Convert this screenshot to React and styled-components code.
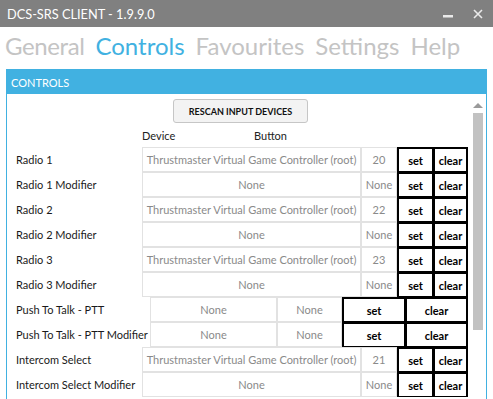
import React from 'react';
import styled, { createGlobalStyle } from 'styled-components';

const ACCENT = '#41B1E1';
const TM = 'Thrustmaster Virtual Game Controller (root)';

const Global = createGlobalStyle`
  html, body { margin: 0; padding: 0; background: #fff; overflow: hidden; }
  body { font-family: "Lato", "Open Sans", sans-serif; }
  * { box-sizing: border-box; }
`;

const Window = styled.div`
  width: 493px;
  height: 399px;
  display: flex;
  flex-direction: column;
  overflow: hidden;
  background: #fff;
`;

const TitleBar = styled.div`
  flex: none;
  height: 27px;
  background: #808080;
  display: flex;
  align-items: center;
  padding-left: 7px;
  color: #fff;
`;

const Title = styled.div`
  font-size: 12.75px;
`;

const WindowButtons = styled.div`
  margin-left: auto;
  display: flex;
  height: 100%;
`;

const WindowButton = styled.div`
  width: 30px;
  height: 100%;
  display: flex;
  align-items: center;
  justify-content: center;
`;

const TabStrip = styled.div`
  flex: none;
  height: 42px;
  display: flex;
  gap: 11px;
  padding: 3px 0 0 5px;
`;

const Tab = styled.div`
  font-size: 24px;
  line-height: 32px;
  letter-spacing: ${p => (p.$tight ? '-0.4px' : '0')};
  color: ${p => (p.$active ? ACCENT : '#c4c4c4')};
`;

const Panel = styled.div`
  flex: 1;
  min-height: 0;
  margin: 0 6px;
  border: 1px solid ${ACCENT};
  border-bottom: none;
  display: flex;
  flex-direction: column;
`;

const PanelHeader = styled.div`
  flex: none;
  height: 24px;
  background: ${ACCENT};
  color: #fff;
  font-size: 11px;
  display: flex;
  align-items: center;
  padding-left: 4px;
`;

const PanelBody = styled.div`
  flex: 1;
  min-height: 0;
  display: flex;
`;

const Content = styled.div`
  flex: 1;
  display: flex;
  flex-direction: column;
`;

const RescanBar = styled.div`
  display: flex;
  justify-content: center;
  padding: 5px 0 0 5px;
`;

const RescanButton = styled.div`
  width: 135px;
  height: 24px;
  border: 1px solid #c6c6c6;
  border-radius: 3px;
  background: #f3f3f3;
  display: flex;
  align-items: center;
  justify-content: center;
  font-size: 9px;
  font-weight: 700;
  color: #111;
`;

const HeaderRow = styled.div`
  height: 24px;
  display: flex;
  align-items: center;
  font-size: 11px;
  color: #222;
  padding-left: 135px;
`;

const HeaderLabel = styled.div`
  width: ${p => p.$w}px;
`;

const Row = styled.div`
  height: 25px;
  display: grid;
  grid-template-columns: ${p =>
    p.$wide ? '143px 127px 65px 63px 63px' : '135px 219px 36px 36px 35px'};
  font-size: 11px;
`;

const Label = styled.div`
  display: flex;
  align-items: center;
  padding-left: 9px;
  color: #1a1a1a;
  white-space: nowrap;
`;

const Cell = styled.div`
  display: flex;
  align-items: center;
  justify-content: center;
  border: 1px solid #e2e2e2;
  color: #8a8a8a;
  white-space: nowrap;
  overflow: hidden;
`;

const KeyButton = styled.div`
  display: flex;
  align-items: center;
  justify-content: center;
  background: #fff;
  border: solid #000;
  border-width: ${p => (p.$last ? '2px 2px 1px 2px' : '2px 1px 1px 2px')};
  color: #000;
  font-weight: 700;
`;

const ScrollBar = styled.div`
  flex: none;
  width: 17px;
  display: flex;
  flex-direction: column;
  align-items: center;
  padding-top: 9px;
`;

const ArrowUp = styled.div`
  width: 0;
  height: 0;
  border-left: 5px solid transparent;
  border-right: 5px solid transparent;
  border-bottom: 5px solid #9a9a9a;
`;

const Thumb = styled.div`
  margin-top: 5px;
  width: 10px;
  height: 217px;
  background: #c2c2c2;
`;

const rows = [
  { label: 'Radio 1', device: TM, button: '20' },
  { label: 'Radio 1 Modifier', device: 'None', button: 'None' },
  { label: 'Radio 2', device: TM, button: '22' },
  { label: 'Radio 2 Modifier', device: 'None', button: 'None' },
  { label: 'Radio 3', device: TM, button: '23' },
  { label: 'Radio 3 Modifier', device: 'None', button: 'None' },
  { label: 'Push To Talk - PTT', device: 'None', button: 'None', wide: true },
  { label: 'Push To Talk - PTT Modifier', device: 'None', button: 'None', wide: true },
  { label: 'Intercom Select', device: TM, button: '21' },
  { label: 'Intercom Select Modifier', device: 'None', button: 'None' },
];

export default function App() {
  return (
    <Window>
      <Global />
      <TitleBar>
        <Title>DCS-SRS CLIENT - 1.9.9.0</Title>
        <WindowButtons>
          <WindowButton>
            <svg width="10" height="10" viewBox="0 0 10 10">
              <rect x="0" y="6" width="10" height="2.5" fill="#eaeaea" />
            </svg>
          </WindowButton>
          <WindowButton>
            <svg width="10" height="10" viewBox="0 0 10 10">
              <path d="M1 1 L9 9 M9 1 L1 9" stroke="#eaeaea" strokeWidth="1.6" />
            </svg>
          </WindowButton>
        </WindowButtons>
      </TitleBar>
      <TabStrip>
        <Tab $tight>General</Tab>
        <Tab $active>Controls</Tab>
        <Tab>Favourites</Tab>
        <Tab>Settings</Tab>
        <Tab>Help</Tab>
      </TabStrip>
      <Panel>
        <PanelHeader>CONTROLS</PanelHeader>
        <PanelBody>
          <Content>
            <RescanBar>
              <RescanButton>RESCAN INPUT DEVICES</RescanButton>
            </RescanBar>
            <HeaderRow>
              <HeaderLabel $w={112}>Device</HeaderLabel>
              <HeaderLabel $w={60}>Button</HeaderLabel>
            </HeaderRow>
            {rows.map(r => (
              <Row key={r.label} $wide={r.wide}>
                <Label>{r.label}</Label>
                <Cell>{r.device}</Cell>
                <Cell>{r.button}</Cell>
                <KeyButton>set</KeyButton>
                <KeyButton $last>clear</KeyButton>
              </Row>
            ))}
          </Content>
          <ScrollBar>
            <ArrowUp />
            <Thumb />
          </ScrollBar>
        </PanelBody>
      </Panel>
    </Window>
  );
}
